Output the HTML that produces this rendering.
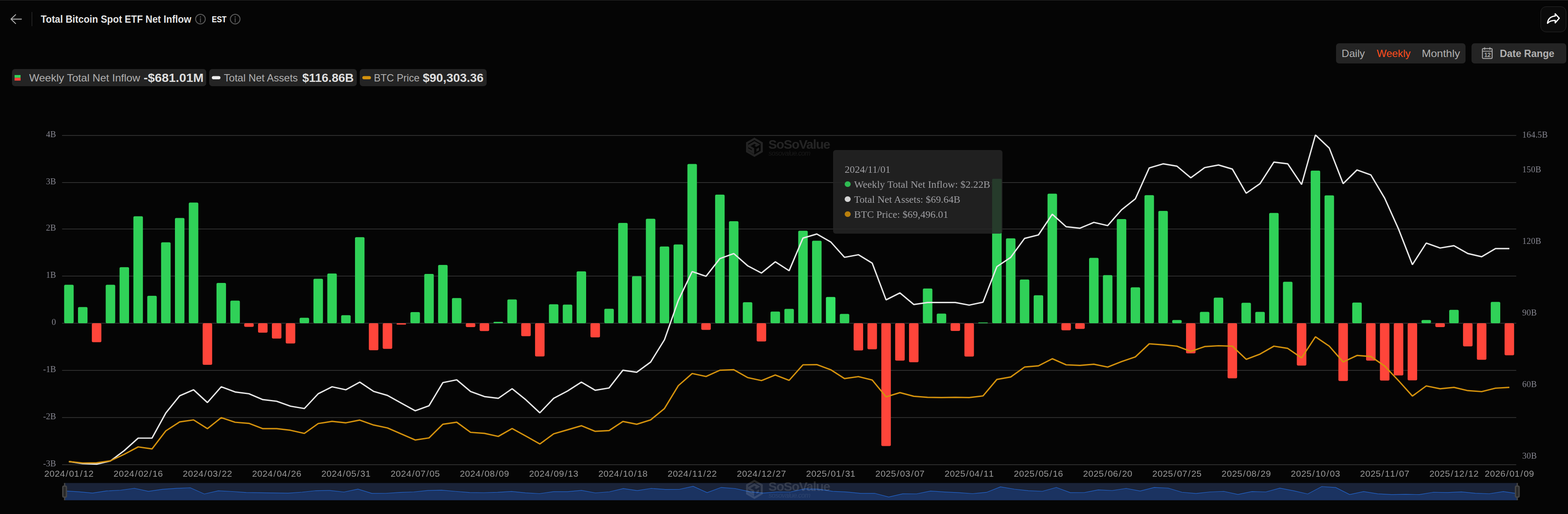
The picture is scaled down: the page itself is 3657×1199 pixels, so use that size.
<!DOCTYPE html>
<html lang="en">
<head>
<meta charset="utf-8">
<title>Total Bitcoin Spot ETF Net Inflow</title>
<style>
*{box-sizing:border-box}
html,body{margin:0;padding:0;background:#050505}
body{width:3657px;height:1199px;position:relative;overflow:hidden;font-family:"Liberation Sans",sans-serif;color:#e6e6e6}
.abs{position:absolute}
.t{position:absolute;margin:0;white-space:nowrap;transform-origin:0 50%}
.topline{position:absolute;left:0;top:0;width:100%;height:1px;background:#2c2c2c}
.divider{position:absolute;left:74px;top:28px;width:1.2px;height:33px;background:#3a3a3a}
.box{position:absolute;background:#242424;border-radius:7px}
.share{position:absolute;left:3593px;top:15px;width:60px;height:60px;border:1px solid #2a2a2a;border-radius:13px;background:#0b0b0b}
.tip{position:absolute;left:1943px;top:350px;width:394.5px;height:194.5px;background:rgba(37,37,37,.87);border-radius:6px}
.dot{position:absolute;left:1970.4px;width:13.6px;height:13.6px;border-radius:50%}
.wm{position:absolute;left:1740px;width:200px;height:45px}
.wm svg{position:absolute;left:0;top:0}
.wm1{position:absolute;left:52px;top:1.3px;font-size:30px;line-height:30px;font-weight:700;color:#fff;letter-spacing:-1.3px;white-space:nowrap}
.wm2{position:absolute;left:52.5px;top:28px;font-size:16px;line-height:18px;font-style:italic;color:#fff;opacity:.6;white-space:nowrap;letter-spacing:-0.75px}
</style>
</head>
<body>
<div class="topline"></div>
<header>
<svg class="abs" style="left:22px;top:30px" width="32" height="30" viewBox="0 0 32 30" aria-label="Back"><path d="M28 14.6H3.6M14.4 4.2 3.6 14.6 14.4 25" fill="none" stroke="#b0b0b0" stroke-width="2.1" stroke-linecap="round" stroke-linejoin="round"/></svg>
<div class="divider"></div>
<h1 class="t" style="left:95.10px;top:30.86px;font-size:23.5px;line-height:28px;font-weight:700;color:#e4e4e4;transform:scaleX(0.9515);">Total Bitcoin Spot ETF Net Inflow</h1>
<span class="t" style="left:493.86px;top:32.32px;font-size:21px;line-height:25px;font-weight:700;color:#ffffff;transform:scaleX(0.8372);">EST</span>
<svg class="abs" style="left:454px;top:31px" width="27" height="27" viewBox="0 0 27 27"><circle cx="13.5" cy="13.6" r="11.3" fill="none" stroke="#575757" stroke-width="2.2"/><circle cx="13.5" cy="8.5" r="1.4" fill="#575757"/><path d="M13.5 12.4v8.3" stroke="#575757" stroke-width="2.1" stroke-linecap="round"/></svg>
<svg class="abs" style="left:534.9px;top:31px" width="27" height="27" viewBox="0 0 27 27"><circle cx="13.5" cy="13.6" r="11.3" fill="none" stroke="#575757" stroke-width="2.2"/><circle cx="13.5" cy="8.5" r="1.4" fill="#575757"/><path d="M13.5 12.4v8.3" stroke="#575757" stroke-width="2.1" stroke-linecap="round"/></svg>
<div class="share"><svg width="58" height="58" viewBox="0 0 58 58" style="position:absolute;left:0;top:0"><path d="M33.2 16.2 42.6 26.4 33.2 37.2V31.6C24.5 31.4 19 34 15.2 38.2 16.2 29.2 21.8 22.4 33.2 21.4Z" fill="none" stroke="#fff" stroke-width="2.9" stroke-linejoin="round" stroke-linecap="round"/></svg></div>
</header>

<nav>
<div class="box" style="left:3116px;top:101px;width:302px;height:47px"></div>
<span class="t" style="left:3128.68px;top:109.98px;font-size:24px;line-height:29px;font-weight:400;color:#b0b0b0;transform:scaleX(1.0183);">Daily</span>
<span class="t" style="left:3210.80px;top:109.98px;font-size:24px;line-height:29px;font-weight:400;color:#ff4d1e;transform:scaleX(1.0084);">Weekly</span>
<span class="t" style="left:3315.84px;top:109.98px;font-size:24px;line-height:29px;font-weight:400;color:#b0b0b0;transform:scaleX(1.0610);">Monthly</span>
<div class="box" style="left:3432px;top:101px;width:221px;height:47px"></div>
<svg class="abs" width="30" height="32" viewBox="0 0 30 32" style="left:3454px;top:108px"><rect x="3.4" y="5.4" width="22.7" height="23" rx="2.2" fill="none" stroke="#a8a8a8" stroke-width="2.2"/><path d="M3.4 11.5H26.1M8.6 2.4V8M20.9 2.4V8" stroke="#a8a8a8" stroke-width="2.2" fill="none"/><text x="14.9" y="25" font-family="'Liberation Sans',sans-serif" font-size="14" font-weight="700" fill="#a8a8a8" text-anchor="middle" letter-spacing="-0.4">12</text></svg>
<span class="t" style="left:3498.14px;top:110.08px;font-size:24px;line-height:29px;font-weight:700;color:#b0b0b0;transform:scaleX(0.9634);">Date Range</span>
</nav>

<section>
<div class="box" style="left:28px;top:161px;width:453px;height:39.5px"></div>
<svg class="abs" width="16" height="14" style="left:34px;top:175px"><rect x="0" y="0" width="14" height="6.5" fill="#30d158"/><rect x="0" y="6.5" width="14" height="6.5" fill="#ff453a"/></svg>
<span class="t" style="left:67.90px;top:167.28px;font-size:24px;line-height:29px;font-weight:400;color:#b0b0b0;transform:scaleX(1.0410);">Weekly Total Net Inflow</span>
<span class="t" style="left:335.27px;top:163.72px;font-size:28.5px;line-height:34px;font-weight:700;color:#dedede;transform:scaleX(1.0261);">-$681.01M</span>
<div class="box" style="left:488px;top:161px;width:343.5px;height:39.5px"></div>
<svg class="abs" width="22" height="10" style="left:494px;top:177.3px"><rect x="0.1" y="0.4" width="20" height="7.5" rx="3.75" fill="#ededed"/></svg>
<span class="t" style="left:521.90px;top:167.28px;font-size:24px;line-height:29px;font-weight:400;color:#b0b0b0;transform:scaleX(1.0034);">Total Net Assets</span>
<span class="t" style="left:704.90px;top:163.72px;font-size:28.5px;line-height:34px;font-weight:700;color:#dedede;transform:scaleX(0.9840);">$116.86B</span>
<div class="box" style="left:839px;top:161px;width:296px;height:39.5px"></div>
<svg class="abs" width="22" height="10" style="left:845px;top:177.3px"><rect x="0.1" y="0.4" width="20" height="7.5" rx="3.75" fill="#d4920d"/></svg>
<span class="t" style="left:871.93px;top:167.28px;font-size:24px;line-height:29px;font-weight:400;color:#b0b0b0;transform:scaleX(0.9731);">BTC Price</span>
<span class="t" style="left:986.30px;top:163.72px;font-size:28.5px;line-height:34px;font-weight:700;color:#dedede;transform:scaleX(0.9944);">$90,303.36</span>
</section>

<svg class="abs" style="left:0;top:0;will-change:transform" width="3657" height="1199" viewBox="0 0 3657 1199">
<line x1="144.8" x2="3536.3" y1="315.90" y2="315.90" stroke="#3b3b3b" stroke-width="1.5"/>
<line x1="144.8" x2="3536.3" y1="425.80" y2="425.80" stroke="#3b3b3b" stroke-width="1.5"/>
<line x1="144.8" x2="3536.3" y1="534.15" y2="534.15" stroke="#3b3b3b" stroke-width="1.5"/>
<line x1="144.8" x2="3536.3" y1="644.05" y2="644.05" stroke="#3b3b3b" stroke-width="1.5"/>
<line x1="144.8" x2="3536.3" y1="754.10" y2="754.10" stroke="#3b3b3b" stroke-width="1.5"/>
<line x1="144.8" x2="3536.3" y1="863.90" y2="863.90" stroke="#3b3b3b" stroke-width="1.5"/>
<line x1="144.8" x2="3536.3" y1="974.10" y2="974.10" stroke="#3b3b3b" stroke-width="1.5"/>
<line x1="144.8" x2="3536.3" y1="1083.90" y2="1083.90" stroke="#3b3b3b" stroke-width="1.5"/>
<g font-family="'Liberation Serif', serif" font-size="20" fill="#868690" text-anchor="end">
<text x="130.6" y="320.20">4B</text>
<text x="130.6" y="430.10">3B</text>
<text x="130.6" y="538.45">2B</text>
<text x="130.6" y="648.35">1B</text>
<text x="130.6" y="758.40">0</text>
<text x="130.6" y="868.20">-1B</text>
<text x="130.6" y="978.40">-2B</text>
<text x="130.6" y="1088.20">-3B</text>
</g>
<g font-family="'Liberation Serif', serif" font-size="20" fill="#868690" letter-spacing="0.2">
<text x="3550.3" y="320.6">164.5B</text>
<text x="3550.3" y="401.8">150B</text>
<text x="3550.3" y="568.9">120B</text>
<text x="3550.3" y="736">90B</text>
<text x="3550.3" y="903.1">60B</text>
<text x="3550.3" y="1070.2">30B</text>
</g>
<g fill="#30d158"><rect x="149.6" y="664.25" width="22.2" height="89.75" rx="3"/><rect x="181.9" y="716.32" width="22.2" height="37.68" rx="3"/><rect x="246.51" y="664.25" width="22.2" height="89.75" rx="3"/><rect x="278.81" y="623.28" width="22.2" height="130.72" rx="3"/><rect x="311.11" y="504.42" width="22.2" height="249.58" rx="3"/><rect x="343.42" y="690.07" width="22.2" height="63.93" rx="3"/><rect x="375.72" y="565.28" width="22.2" height="188.72" rx="3"/><rect x="408.02" y="508.38" width="22.2" height="245.62" rx="3"/><rect x="440.33" y="472.45" width="22.2" height="281.55" rx="3"/><rect x="504.93" y="659.97" width="22.2" height="94.03" rx="3"/><rect x="537.24" y="701.16" width="22.2" height="52.84" rx="3"/><rect x="698.75" y="741.37" width="22.2" height="12.63" rx="3"/><rect x="731.05" y="650.19" width="22.2" height="103.81" rx="3"/><rect x="763.36" y="638.11" width="22.2" height="115.89" rx="3"/><rect x="795.66" y="735.33" width="22.2" height="18.67" rx="3"/><rect x="827.96" y="553.19" width="22.2" height="200.81" rx="3"/><rect x="957.17" y="728.08" width="22.2" height="25.92" rx="3"/><rect x="989.48" y="638.99" width="22.2" height="115.01" rx="3"/><rect x="1021.78" y="617.9" width="22.2" height="136.1" rx="3"/><rect x="1054.08" y="695.23" width="22.2" height="58.77" rx="3"/><rect x="1150.99" y="750.7" width="22.2" height="3.3" rx="1.65"/><rect x="1183.3" y="698.53" width="22.2" height="55.47" rx="3"/><rect x="1280.21" y="709.73" width="22.2" height="44.27" rx="3"/><rect x="1312.51" y="710.39" width="22.2" height="43.61" rx="3"/><rect x="1344.81" y="633.06" width="22.2" height="120.94" rx="3"/><rect x="1409.42" y="720.28" width="22.2" height="33.72" rx="3"/><rect x="1441.72" y="520.02" width="22.2" height="233.98" rx="3"/><rect x="1474.02" y="644.15" width="22.2" height="109.85" rx="3"/><rect x="1506.33" y="510.13" width="22.2" height="243.87" rx="3"/><rect x="1538.63" y="574.94" width="22.2" height="179.06" rx="3"/><rect x="1570.93" y="570.22" width="22.2" height="183.78" rx="3"/><rect x="1603.23" y="382.6" width="22.2" height="371.4" rx="3"/><rect x="1667.84" y="453.89" width="22.2" height="300.11" rx="3"/><rect x="1700.14" y="516.06" width="22.2" height="237.94" rx="3"/><rect x="1732.45" y="705.12" width="22.2" height="48.88" rx="3"/><rect x="1797.05" y="726.87" width="22.2" height="27.13" rx="3"/><rect x="1829.36" y="720.61" width="22.2" height="33.39" rx="3"/><rect x="1861.66" y="538.25" width="22.2" height="215.75" rx="3"/><rect x="1893.96" y="561.43" width="22.2" height="192.57" rx="3"/><rect x="1958.57" y="732.25" width="22.2" height="21.75" rx="3"/><rect x="2152.39" y="673.04" width="22.2" height="80.96" rx="3"/><rect x="2184.69" y="731.59" width="22.2" height="22.41" rx="3"/><rect x="2281.6" y="752.35" width="22.2" height="1.65" rx="0.82"/><rect x="2313.9" y="416.98" width="22.2" height="337.02" rx="3"/><rect x="2346.2" y="555.94" width="22.2" height="198.06" rx="3"/><rect x="2378.51" y="651.95" width="22.2" height="102.05" rx="3"/><rect x="2410.81" y="688.64" width="22.2" height="65.36" rx="3"/><rect x="2443.11" y="451.8" width="22.2" height="302.2" rx="3"/><rect x="2540.02" y="601.53" width="22.2" height="152.47" rx="3"/><rect x="2572.32" y="641.73" width="22.2" height="112.27" rx="3"/><rect x="2604.63" y="511.01" width="22.2" height="242.99" rx="3"/><rect x="2636.93" y="670.29" width="22.2" height="83.71" rx="3"/><rect x="2669.23" y="455.21" width="22.2" height="298.79" rx="3"/><rect x="2701.54" y="492.01" width="22.2" height="261.99" rx="3"/><rect x="2733.84" y="746.53" width="22.2" height="7.47" rx="3"/><rect x="2798.45" y="727.42" width="22.2" height="26.58" rx="3"/><rect x="2830.75" y="694.13" width="22.2" height="59.87" rx="3"/><rect x="2895.35" y="706.33" width="22.2" height="47.67" rx="3"/><rect x="2927.66" y="727.42" width="22.2" height="26.58" rx="3"/><rect x="2959.96" y="496.73" width="22.2" height="257.27" rx="3"/><rect x="2992.26" y="657.33" width="22.2" height="96.67" rx="3"/><rect x="3056.87" y="398.09" width="22.2" height="355.91" rx="3"/><rect x="3089.17" y="455.87" width="22.2" height="298.13" rx="3"/><rect x="3153.78" y="705.67" width="22.2" height="48.33" rx="3"/><rect x="3315.29" y="746.53" width="22.2" height="7.47" rx="3"/><rect x="3379.9" y="722.69" width="22.2" height="31.31" rx="3"/><rect x="3476.81" y="704.35" width="22.2" height="49.65" rx="3"/></g>
<g fill="#34e364"><rect x="1926.27" y="692.7" width="22.2" height="61.3" rx="3"/></g>
<g fill="#ff453a"><rect x="214.21" y="754" width="22.2" height="44.27" rx="3"/><rect x="472.63" y="754" width="22.2" height="97.11" rx="3"/><rect x="569.54" y="754" width="22.2" height="8.57" rx="3"/><rect x="601.84" y="754" width="22.2" height="21.97" rx="3"/><rect x="634.14" y="754" width="22.2" height="35.81" rx="3"/><rect x="666.45" y="754" width="22.2" height="47.24" rx="3"/><rect x="860.27" y="754" width="22.2" height="63.05" rx="3"/><rect x="892.57" y="754" width="22.2" height="59.65" rx="3"/><rect x="924.87" y="754" width="22.2" height="3.3" rx="1.65"/><rect x="1086.39" y="754" width="22.2" height="8.9" rx="3"/><rect x="1118.69" y="754" width="22.2" height="18.34" rx="3"/><rect x="1215.6" y="754" width="22.2" height="30.21" rx="3"/><rect x="1247.9" y="754" width="22.2" height="77.55" rx="3"/><rect x="1377.11" y="754" width="22.2" height="32.96" rx="3"/><rect x="1635.54" y="754" width="22.2" height="15.38" rx="3"/><rect x="1764.75" y="754" width="22.2" height="42.62" rx="3"/><rect x="1990.87" y="754" width="22.2" height="63.49" rx="3"/><rect x="2023.17" y="754" width="22.2" height="60.64" rx="3"/><rect x="2055.48" y="754" width="22.2" height="286.38" rx="3"/><rect x="2087.78" y="754" width="22.2" height="87.22" rx="3"/><rect x="2120.08" y="754" width="22.2" height="91.07" rx="3"/><rect x="2216.99" y="754" width="22.2" height="18.02" rx="3"/><rect x="2249.29" y="754" width="22.2" height="77.77" rx="3"/><rect x="2475.42" y="754" width="22.2" height="16.59" rx="3"/><rect x="2507.72" y="754" width="22.2" height="13.29" rx="3"/><rect x="2766.14" y="754" width="22.2" height="70.19" rx="3"/><rect x="2863.05" y="754" width="22.2" height="128.52" rx="3"/><rect x="3024.57" y="754" width="22.2" height="98.65" rx="3"/><rect x="3121.48" y="754" width="22.2" height="134.68" rx="3"/><rect x="3186.08" y="754" width="22.2" height="87.22" rx="3"/><rect x="3218.38" y="754" width="22.2" height="133.69" rx="3"/><rect x="3250.69" y="754" width="22.2" height="121.82" rx="3"/><rect x="3282.99" y="754" width="22.2" height="133.25" rx="3"/><rect x="3347.6" y="754" width="22.2" height="9.01" rx="3"/><rect x="3412.2" y="754" width="22.2" height="54.05" rx="3"/><rect x="3444.51" y="754" width="22.2" height="85.35" rx="3"/><rect x="3509.11" y="754" width="22.2" height="74.81" rx="3"/></g>
<polyline points="160.7,1076.6 193,1081.3 225.31,1082.6 257.61,1075.3 289.91,1051 322.21,1022 354.52,1022 386.82,963.3 419.12,923.2 451.43,909.2 483.73,939 516.03,902.3 548.34,914.3 580.64,918.5 612.94,932.2 645.24,936 677.55,947.5 709.85,953 742.15,918.5 774.46,902.3 806.76,909.2 839.06,891.3 871.37,913 903.67,922.4 935.97,940.3 968.27,958.2 1000.58,946.4 1032.88,892.5 1065.18,886 1097.49,913.3 1129.79,925.1 1162.09,929.2 1194.4,906.7 1226.7,932.8 1259,963 1291.31,929.2 1323.61,912.1 1355.91,891.4 1388.21,910.3 1420.52,905 1452.82,863.6 1485.12,868.3 1517.43,844.6 1549.73,792.5 1582.03,700.8 1614.33,633.4 1646.64,644.6 1678.94,603.2 1711.24,591.4 1743.55,619.8 1775.85,636.9 1808.15,610.7 1840.46,631.5 1872.76,555.4 1905.06,545.9 1937.37,564.3 1969.67,600.3 2001.97,594.2 2034.27,613.9 2066.58,699.5 2098.88,683.2 2131.18,710.3 2163.49,705.6 2195.79,705.6 2228.09,705.6 2260.39,711.7 2292.7,704.9 2325,622 2357.3,600.3 2389.61,556.1 2421.91,548 2454.21,499.7 2486.52,528.9 2518.82,532.3 2551.12,518.8 2583.42,526.2 2615.73,489.5 2648.03,463.7 2680.33,391.7 2712.64,382.2 2744.94,387.6 2777.24,414.8 2809.55,391 2841.85,384.9 2874.15,394.4 2906.45,450.8 2938.76,428.4 2971.06,378.1 3003.36,382.2 3035.67,430.4 3067.97,314.9 3100.27,345.5 3132.58,428.4 3164.88,396.5 3197.18,408 3229.48,462.4 3261.79,534.4 3294.09,617.3 3326.39,567 3358.7,578.5 3391,573.1 3423.3,591.4 3455.61,598.9 3487.91,579.9 3520.21,579.9" fill="none" stroke="#e8e8e8" stroke-width="3.2" stroke-linejoin="bevel" stroke-linecap="butt"/>
<polyline points="160.7,1076.6 193,1080 225.31,1079.6 257.61,1074.9 289.91,1059.6 322.21,1042.5 354.52,1047.2 386.82,1005 419.12,984.1 451.43,979.5 483.73,999.9 516.03,974.3 548.34,985 580.64,987.6 612.94,999.9 645.24,999.9 677.55,1003.7 709.85,1011 742.15,988 774.46,982.9 806.76,986.3 839.06,979.9 871.37,991.4 903.67,998.2 935.97,1012.3 968.27,1026.3 1000.58,1021.5 1032.88,989.6 1065.18,984.9 1097.49,1008.5 1129.79,1010.9 1162.09,1018 1194.4,999.6 1226.7,1017.4 1259,1035.7 1291.31,1012 1323.61,1002.6 1355.91,993.1 1388.21,1006.2 1420.52,1004.4 1452.82,983.1 1485.12,989.6 1517.43,979.5 1549.73,952.9 1582.03,899.6 1614.33,871.2 1646.64,878.3 1678.94,863.6 1711.24,862.4 1743.55,880.7 1775.85,887.8 1808.15,874.8 1840.46,887.3 1872.76,851 1905.06,850.6 1937.37,862.4 1969.67,883.2 2001.97,878.5 2034.27,886.5 2066.58,925.8 2098.88,915.9 2131.18,924.4 2163.49,926.8 2195.79,927.3 2228.09,926.8 2260.39,927.3 2292.7,923.5 2325,885.1 2357.3,879.4 2389.61,856.2 2421.91,853.4 2454.21,836.8 2486.52,851 2518.82,852.4 2551.12,849.6 2583.42,856.2 2615.73,843.5 2648.03,832.5 2680.33,802 2712.64,804.4 2744.94,807.5 2777.24,819.8 2809.55,808.4 2841.85,806.5 2874.15,807.5 2906.45,838.2 2938.76,825.9 2971.06,807.5 3003.36,812.7 3035.67,834.9 3067.97,785.7 3100.27,807.5 3132.58,844.4 3164.88,829.2 3197.18,831.6 3229.48,853.9 3261.79,888 3294.09,923.9 3326.39,900.3 3358.7,906.9 3391,903.6 3423.3,911.2 3455.61,913.5 3487.91,905.5 3520.21,903.6" fill="none" stroke="#d4920d" stroke-width="3.2" stroke-linejoin="bevel" stroke-linecap="butt"/>
<g font-family="'Liberation Sans', sans-serif" font-size="21.0" fill="#9a9a9a">
<text x="103.34 115.5 127.66 139.82 153.3 160.94 173.1 186.58 194.22 206.38" y="1111.8">2024/01/12</text>
<text x="264.85 277.01 289.17 301.33 314.82 322.45 334.61 348.1 355.73 367.89" y="1111.8">2024/02/16</text>
<text x="426.37 438.53 450.69 462.85 476.33 483.97 496.13 509.61 517.25 529.41" y="1111.8">2024/03/22</text>
<text x="587.88 600.04 612.2 624.36 637.85 645.48 657.64 671.13 678.76 690.92" y="1111.8">2024/04/26</text>
<text x="749.4 761.56 773.72 785.88 799.36 807 819.16 832.64 840.28 852.44" y="1111.8">2024/05/31</text>
<text x="910.91 923.07 935.23 947.39 960.88 968.51 980.67 994.16 1001.79 1013.95" y="1111.8">2024/07/05</text>
<text x="1072.43 1084.59 1096.75 1108.91 1122.39 1130.03 1142.19 1155.67 1163.31 1175.47" y="1111.8">2024/08/09</text>
<text x="1233.94 1246.1 1258.26 1270.42 1283.91 1291.54 1303.7 1317.19 1324.82 1336.98" y="1111.8">2024/09/13</text>
<text x="1395.46 1407.62 1419.78 1431.94 1445.42 1453.06 1465.22 1478.7 1486.34 1498.5" y="1111.8">2024/10/18</text>
<text x="1556.97 1569.13 1581.29 1593.45 1606.94 1614.57 1626.73 1640.22 1647.85 1660.01" y="1111.8">2024/11/22</text>
<text x="1718.49 1730.65 1742.81 1754.97 1768.45 1776.09 1788.25 1801.73 1809.37 1821.53" y="1111.8">2024/12/27</text>
<text x="1880 1892.16 1904.32 1916.48 1929.97 1937.6 1949.76 1963.25 1970.88 1983.04" y="1111.8">2025/01/31</text>
<text x="2041.52 2053.68 2065.84 2078 2091.48 2099.12 2111.28 2124.76 2132.4 2144.56" y="1111.8">2025/03/07</text>
<text x="2203.03 2215.19 2227.35 2239.51 2253 2260.63 2272.79 2286.28 2293.91 2306.07" y="1111.8">2025/04/11</text>
<text x="2364.55 2376.71 2388.87 2401.03 2414.51 2422.15 2434.31 2447.79 2455.43 2467.59" y="1111.8">2025/05/16</text>
<text x="2526.06 2538.22 2550.38 2562.54 2576.03 2583.66 2595.82 2609.31 2616.94 2629.1" y="1111.8">2025/06/20</text>
<text x="2687.58 2699.74 2711.9 2724.06 2737.54 2745.18 2757.34 2770.82 2778.46 2790.62" y="1111.8">2025/07/25</text>
<text x="2849.09 2861.25 2873.41 2885.57 2899.06 2906.69 2918.85 2932.34 2939.97 2952.13" y="1111.8">2025/08/29</text>
<text x="3010.61 3022.77 3034.93 3047.09 3060.57 3068.21 3080.37 3093.85 3101.49 3113.65" y="1111.8">2025/10/03</text>
<text x="3172.12 3184.28 3196.44 3208.6 3222.09 3229.72 3241.88 3255.37 3263 3275.16" y="1111.8">2025/11/07</text>
<text x="3333.64 3345.8 3357.96 3370.12 3383.6 3391.24 3403.4 3416.88 3424.52 3436.68" y="1111.8">2025/12/12</text>
<text x="3462.85 3475.01 3487.17 3499.33 3512.82 3520.45 3532.61 3546.1 3553.73 3565.89" y="1111.8">2026/01/09</text>
</g>
<rect x="150.7" y="1126.7" width="3388" height="40.1" fill="#1a2338"/>
<path d="M150.7,1166.8 L150.7,1145.08 L183.28,1147.07 L215.85,1150.18 L248.43,1145.08 L281.01,1143.53 L313.58,1139 L346.16,1146.07 L378.74,1141.32 L411.32,1139.15 L443.89,1137.79 L476.47,1152.2 L509.05,1144.92 L541.62,1146.49 L574.2,1148.83 L606.78,1149.34 L639.35,1149.86 L671.93,1150.3 L704.51,1148.02 L737.08,1144.55 L769.66,1144.09 L802.24,1147.79 L834.82,1140.86 L867.39,1150.9 L899.97,1150.77 L932.55,1148.63 L965.12,1147.51 L997.7,1144.12 L1030.28,1143.32 L1062.85,1146.26 L1095.43,1148.84 L1128.01,1149.2 L1160.58,1148.37 L1193.16,1146.39 L1225.74,1149.65 L1258.32,1151.45 L1290.89,1146.82 L1323.47,1146.84 L1356.05,1143.9 L1388.62,1149.75 L1421.2,1147.22 L1453.78,1139.6 L1486.35,1144.32 L1518.93,1139.22 L1551.51,1141.69 L1584.08,1141.51 L1616.66,1134.37 L1649.24,1149.09 L1681.82,1137.08 L1714.39,1139.45 L1746.97,1146.64 L1779.55,1150.12 L1812.12,1147.47 L1844.7,1147.23 L1877.28,1140.29 L1909.85,1141.17 L1942.43,1146.17 L1975.01,1147.67 L2007.58,1150.92 L2040.16,1150.81 L2072.74,1159.4 L2105.32,1151.82 L2137.89,1151.97 L2170.47,1145.42 L2203.05,1147.65 L2235.62,1149.19 L2268.2,1151.46 L2300.78,1148.44 L2333.35,1135.68 L2365.93,1140.96 L2398.51,1144.62 L2431.08,1146.01 L2463.66,1137 L2496.24,1149.13 L2528.82,1149.01 L2561.39,1142.7 L2593.97,1144.23 L2626.55,1139.25 L2659.12,1145.31 L2691.7,1137.13 L2724.28,1138.53 L2756.85,1148.22 L2789.43,1151.17 L2822.01,1147.49 L2854.58,1146.22 L2887.16,1153.39 L2919.74,1146.69 L2952.32,1147.49 L2984.89,1138.71 L3017.47,1144.82 L3050.05,1152.25 L3082.62,1134.96 L3115.2,1137.16 L3147.78,1153.62 L3180.35,1146.66 L3212.93,1151.82 L3245.51,1153.59 L3278.08,1153.14 L3310.66,1153.57 L3343.24,1148.22 L3375.82,1148.84 L3408.39,1147.31 L3440.97,1150.56 L3473.55,1151.75 L3506.12,1146.61 L3538.7,1151.35 L3538.7,1166.8 Z" fill="#1b3361"/>
<polyline points="150.7,1145.08 183.28,1147.07 215.85,1150.18 248.43,1145.08 281.01,1143.53 313.58,1139 346.16,1146.07 378.74,1141.32 411.32,1139.15 443.89,1137.79 476.47,1152.2 509.05,1144.92 541.62,1146.49 574.2,1148.83 606.78,1149.34 639.35,1149.86 671.93,1150.3 704.51,1148.02 737.08,1144.55 769.66,1144.09 802.24,1147.79 834.82,1140.86 867.39,1150.9 899.97,1150.77 932.55,1148.63 965.12,1147.51 997.7,1144.12 1030.28,1143.32 1062.85,1146.26 1095.43,1148.84 1128.01,1149.2 1160.58,1148.37 1193.16,1146.39 1225.74,1149.65 1258.32,1151.45 1290.89,1146.82 1323.47,1146.84 1356.05,1143.9 1388.62,1149.75 1421.2,1147.22 1453.78,1139.6 1486.35,1144.32 1518.93,1139.22 1551.51,1141.69 1584.08,1141.51 1616.66,1134.37 1649.24,1149.09 1681.82,1137.08 1714.39,1139.45 1746.97,1146.64 1779.55,1150.12 1812.12,1147.47 1844.7,1147.23 1877.28,1140.29 1909.85,1141.17 1942.43,1146.17 1975.01,1147.67 2007.58,1150.92 2040.16,1150.81 2072.74,1159.4 2105.32,1151.82 2137.89,1151.97 2170.47,1145.42 2203.05,1147.65 2235.62,1149.19 2268.2,1151.46 2300.78,1148.44 2333.35,1135.68 2365.93,1140.96 2398.51,1144.62 2431.08,1146.01 2463.66,1137 2496.24,1149.13 2528.82,1149.01 2561.39,1142.7 2593.97,1144.23 2626.55,1139.25 2659.12,1145.31 2691.7,1137.13 2724.28,1138.53 2756.85,1148.22 2789.43,1151.17 2822.01,1147.49 2854.58,1146.22 2887.16,1153.39 2919.74,1146.69 2952.32,1147.49 2984.89,1138.71 3017.47,1144.82 3050.05,1152.25 3082.62,1134.96 3115.2,1137.16 3147.78,1153.62 3180.35,1146.66 3212.93,1151.82 3245.51,1153.59 3278.08,1153.14 3310.66,1153.57 3343.24,1148.22 3375.82,1148.84 3408.39,1147.31 3440.97,1150.56 3473.55,1151.75 3506.12,1146.61 3538.7,1151.35" fill="none" stroke="#2368d4" stroke-width="1.15"/>
<rect x="149.2" y="1126.7" width="3" height="40.1" fill="#474747"/>
<rect x="146.5" y="1134" width="8.4" height="25.4" rx="2.5" fill="#292929" stroke="#464646" stroke-width="3"/>
<rect x="3537.2" y="1126.7" width="3" height="40.1" fill="#474747"/>
<rect x="3534.5" y="1134" width="8.4" height="25.4" rx="2.5" fill="#292929" stroke="#464646" stroke-width="3"/>
</svg>

<div class="wm" style="top:320.6px;opacity:0.125">
<svg width="39" height="45" viewBox="0 0 39 45"><path fill="#fff" fill-rule="evenodd" d="M19.5 0 39 11.2V33.8L19.5 45 0 33.8V11.2ZM19.5 5.6 4.8 14V31L19.5 39.4 34.2 31V14Z"/><path fill="#fff" d="M19.5 8.6 33 16.3 23.8 21.6 19.5 19.1 23.5 16.8 19.5 14.5 10.3 19.8 18.8 24.7V38.6L4.8 30.6V24.8L13.6 29.8V27.2L4.8 22.2V17Z M24.2 26.6 30.2 23.2V29.6L24.2 33Z"/></svg>
<span class="wm1">SoSoValue</span><span class="wm2">sosovalue.com</span></div>
<div class="abs" style="left:0;top:0;width:0;height:0;will-change:transform">
<div class="tip"></div>
<div class="dot" style="top:422.9px;background:#2fbb53"></div>
<div class="dot" style="top:457.7px;background:#d4d4d4"></div>
<div class="dot" style="top:492.9px;background:#b97f0c"></div>
<span class="t" style="left:1970.19px;top:381.07px;font-size:23.5px;line-height:28px;font-weight:400;color:#9e9ea2;font-family:'Liberation Serif',serif;transform:scaleX(1.0054);">2024/11/01</span>
<span class="t" style="left:1991.50px;top:415.77px;font-size:23.5px;line-height:28px;font-weight:400;color:#9e9ea2;font-family:'Liberation Serif',serif;transform:scaleX(1.0111);">Weekly Total Net Inflow: $2.22B</span>
<span class="t" style="left:1991.50px;top:451.07px;font-size:23.5px;line-height:28px;font-weight:400;color:#9e9ea2;font-family:'Liberation Serif',serif;transform:scaleX(1.0060);">Total Net Assets: $69.64B</span>
<span class="t" style="left:1991.50px;top:485.87px;font-size:23.5px;line-height:28px;font-weight:400;color:#9e9ea2;font-family:'Liberation Serif',serif;transform:scaleX(1.0066);">BTC Price: $69,496.01</span>
</div>
<div class="wm" style="top:1118.7px;opacity:0.13">
<svg width="39" height="45" viewBox="0 0 39 45"><path fill="#fff" fill-rule="evenodd" d="M19.5 0 39 11.2V33.8L19.5 45 0 33.8V11.2ZM19.5 5.6 4.8 14V31L19.5 39.4 34.2 31V14Z"/><path fill="#fff" d="M19.5 8.6 33 16.3 23.8 21.6 19.5 19.1 23.5 16.8 19.5 14.5 10.3 19.8 18.8 24.7V38.6L4.8 30.6V24.8L13.6 29.8V27.2L4.8 22.2V17Z M24.2 26.6 30.2 23.2V29.6L24.2 33Z"/></svg>
<span class="wm1">SoSoValue</span><span class="wm2">sosovalue.com</span></div>
</body>
</html>
